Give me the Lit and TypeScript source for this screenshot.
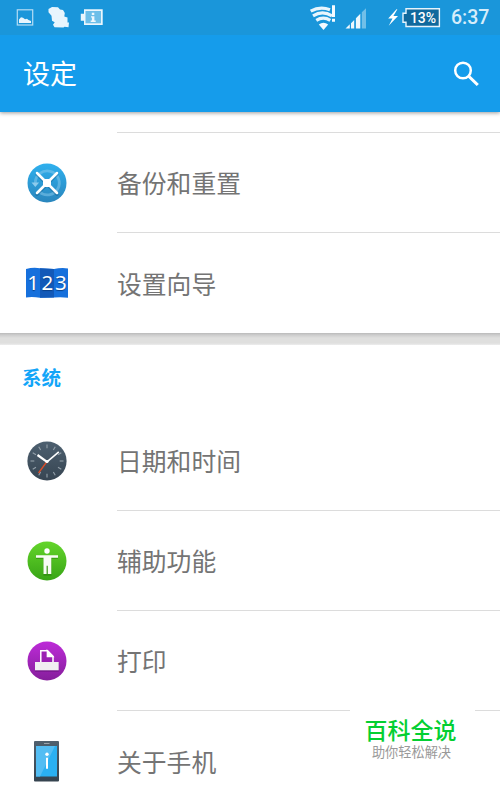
import { LitElement, html, css, svg } from "lit";
import { customElement, property } from "lit/decorators.js";

const icons: Record<string, unknown> = {
  backup: svg`
    <defs><linearGradient id="b" x2="0" y2="1"><stop stop-color="#2fb0ee"/><stop offset="1" stop-color="#2a86bd"/></linearGradient></defs>
    <circle cx="24" cy="24" r="19.5" fill="url(#b)"/>
    <path d="M12.3 24A12 12 0 1 1 16 32.6" fill="none" stroke="#8ccbed" stroke-opacity=".5" stroke-width="2.8"/>
    <path d="M8.500 23.500h7.600l-3.800 4.500z" fill="#8ccbed"/>
    <path d="M14 15.500l20 20M34 15.500L14 35.500" stroke="#0b5584" stroke-opacity=".4" stroke-width="3" stroke-linecap="round"/>
    <path d="M14 14l20 20M34 14L14 34" stroke="#fff" stroke-width="2.500" stroke-linecap="round"/>
    <rect x="20" y="20" width="8" height="8" rx="1.500" fill="#fff"/>`,
  guide: svg`
    <path d="M3 10q7-2 14-.8l14 .8q7-1.500 14-.6v29.300q-7-1-14-.2l-14 .2q-7-1-14-.3z" fill="#1670dc"/>
    <path d="M17 9.200l14 .8v28.500l-14 .2z" fill="#1259b8"/>
    <g font-family="'Noto Sans', sans-serif" font-size="20.500" text-anchor="middle" fill="#fff" style="text-shadow:0 1px 1px #083f87">
      <text x="10" y="31">1</text><text x="24.400" y="31">2</text><text x="37.900" y="31">3</text>
    </g>`,
  clock: svg`
    <defs><linearGradient id="c" x2="0" y2="1"><stop stop-color="#4d6070"/><stop offset="1" stop-color="#374552"/></linearGradient></defs>
    <circle cx="24" cy="24" r="19.600" fill="url(#c)"/>
    <g stroke="#94a0aa" stroke-width="1.100">
      ${[0, 30, 60, 90, 120, 150, 180, 210, 240, 270, 300, 330].map(
        (a) => svg`<path d="M24 7.500v3.800" transform="rotate(${a} 24 24)"/>`)}
    </g>
    <path d="M24 24.500L15.500 36" stroke="#dc4d28" stroke-width="1.300"/>
    <path d="M14.500 18L24 24.800" stroke="#fff" stroke-width="2.200"/>
    <path d="M35.800 14.800L24 24.800" stroke="#fff" stroke-width="1.600"/>
    <circle cx="24" cy="24.500" r="1.600" fill="#fff"/>`,
  access: svg`
    <defs><linearGradient id="a" x2="0" y2="1"><stop stop-color="#64d52b"/><stop offset="1" stop-color="#38a416"/></linearGradient></defs>
    <circle cx="24" cy="24" r="19.500" fill="url(#a)"/>
    <path transform="translate(0 1.200)" fill="#226c0b" fill-opacity=".4" d="M13 18.200h22v2.600h-6.500v16.700H20.500V20.800H13z"/>
    <circle cx="24" cy="14" r="2.700" fill="#fff"/>
    <path d="M13 18.200h22v2.500h-6.700v16.300h-3.500v-8.200h-1.200V37h-3.100V20.700H13z" fill="#f8fcf5"/>`,
  print: svg`
    <defs><linearGradient id="p" x2="0" y2="1"><stop stop-color="#bd2bd8"/><stop offset="1" stop-color="#851e9b"/></linearGradient></defs>
    <circle cx="24" cy="24" r="19.500" fill="url(#p)"/>
    <path d="M12 26h23.700v8.700H12z" fill="#550c69" fill-opacity=".5"/>
    <path d="M17.800 26V13.700h6.700l5.500 5.700V26" fill="#9b20b3" stroke="#fff" stroke-width="1.500"/>
    <path d="M24.300 13.700v5.900h5.700z" fill="#fff" stroke="#fff" stroke-width="1.300"/>
    <path d="M12 25h23.700v8.300H12z" fill="#f1eef2"/>`,
  phone: svg`
    <defs><linearGradient id="h" x2="0" y2="1"><stop stop-color="#50606e"/><stop offset="1" stop-color="#35434f"/></linearGradient></defs>
    <rect x="11" y="4" width="25" height="40.500" rx="1" fill="url(#h)"/>
    <path d="M13 9h21v30.500H13z" fill="#2ab0f2"/>
    <path d="M13 9h19L17 39.500h-4z" fill="#53bdf3"/>
    <path d="M21 6.500h5.500" stroke="#9aa5ad" stroke-width="1"/>
    <circle cx="24" cy="17.300" r="1.700" fill="#fff"/><path d="M24 20.800v11" stroke="#fff" stroke-width="2"/>`,
};

@customElement("status-bar")
class StatusBar extends LitElement {
  static styles = css`
    :host { display: block; position: relative; z-index: 1; height: 35px; background: #1a96da; }
    .bar { display: flex; align-items: center; height: 35px; padding-right: 11px; }
    .art { display: block; flex: none; }
    .charge { margin-left: 38px; width: 34px; text-align: center; font: 500 14px/36px Roboto, sans-serif; color: #fff; }
    .cell { display: grid; width: 73px; flex: none; }
    .cell > * { grid-area: 1 / 1; }
    .time { width: 38px; margin-left: 10px; font: 500 19.500px/36px Roboto, sans-serif; color: #d6edfa; white-space: nowrap; }
    .space { flex: 1; }
  `;
  render() {
    return html`<div class="bar">
      <svg class="art" width="120" height="35" viewBox="0 0 120 35">
        <rect x="17.300" y="9.800" width="15.400" height="15.200" fill="none" stroke="#b4dcf4" stroke-width="1.200"/>
        <path d="M19 23v-3.500l2-2.300 2 .6 2 1.500 2-.6 1.500 1.300 2.500 1V23z" fill="#e8f5fd"/>
        <path d="M48.500 9l3.500-2 6 .3 2 2.200 3 .5 1.800 3-.5 3.500 3.200 1v5h1.500l-.5 4.800-4-.5-1 .7-9-.3-1.500-2.500 1.700-2.500-2.700-1.500-.5-5-3-3.500z" fill="#e8f5fd"/>
        <path d="M84 9.300h18.700V25H84v-4.300h-3.200v-7H84z" fill="#eaf6fd"/>
        <path d="M85.500 11h15.500v12.300H85.500z" fill="#6dbfe9"/>
        <path d="M91.800 12.800h2.500V15h-2.500zM91 16.300h3.400v4.300h1.300V22H90.700v-1.400h1.200v-3H91z" fill="#edf8fe"/>
      </svg>
      <div class="space"></div>
      <svg class="art" width="62" height="35" viewBox="306 0 62 35">
        <g fill="none" stroke="#e8f5fd" stroke-width="3.200">
          <path d="M310.700 11.200Q320 6 330 9.800M313 15.800q9.500-5.800 19 0M316.300 20.300q7-4.400 14 0"/>
        </g>
        <path d="M318.800 24.500q4.700-3.600 9.400 0L323.500 30z" fill="#f4faff"/>
        <path d="M332 5.200h3V17h-3zM332 18.800h3v3h-3z" fill="#f4faff"/>
        <path d="M345.500 28.500l4.300-4.200v4.200zM351 23.200l3.200-3.200v8.500h-3.200zM355.900 18.300l4.400-4.600v14.800h-4.400z" fill="#eff8fd"/>
        <path d="M361.800 12.200l4.200-4v20.300h-4.200z" fill="#71bfe8"/>
      </svg>
      <div class="cell">
        <svg class="art" width="73" height="35" viewBox="368 0 73 35">
          <path d="M396.500 9.300l-8.300 9.200h4.300l-3.800 7.200 9.300-9.700h-4.600l4-6.700z" fill="#fff"/>
          <path d="M406 8.700h33.400v17.800H406v-4.300h-3v-9h3z" fill="#10699d" stroke="#e6f4fc" stroke-width="1.400"/>
        </svg>
        <div class="charge">13%</div>
      </div>
      <div class="time">6:37</div>
    </div>`;
  }
}

@customElement("setting-row")
class SettingRow extends LitElement {
  @property() icon = "";
  @property() label = "";
  @property({ type: Boolean }) last = false;
  static styles = css`
    :host { display: block; }
    .row { display: grid; grid-template-columns: 94px 1fr; column-gap: 23px; height: 100px; }
    .icon { display: flex; align-items: center; justify-content: center; }
    .label { display: flex; align-items: center; box-sizing: border-box; height: 100px; padding-bottom: 2px; border-bottom: 1px solid #dcdcdc;
      font-size: 24.800px; line-height: 36px; color: #747474; }
    .last { border-color: transparent; padding-bottom: 0; }
  `;
  render() {
    return html`<div class="row">
      <div class="icon"><svg width="48" height="48" viewBox="0 0 48 48">${icons[this.icon]}</svg></div>
      <div class="label ${this.last ? "last" : ""}">${this.label}</div>
    </div>`;
  }
}

@customElement("app-root")
class AppRoot extends LitElement {
  static styles = css`
    :host { display: block; position: relative; width: 500px; height: 790px; overflow: hidden; background: #fff;
      font-family: "Noto Sans CJK SC", "Noto Sans", sans-serif; }
    .header { position: relative; display: flex; align-items: center; justify-content: space-between; height: 77px; box-sizing: border-box;
      padding: 0 20px 0 23px; background: #159ceb; box-shadow: 0 1px 4px rgba(0,0,0,.4); }
    .title { font-size: 27px; line-height: 40px; padding-bottom: 2px; color: #fff; }
    .lead { height: 20px; margin-left: 117px; border-bottom: 1px solid #dcdcdc; }
    .gap { height: 12px; background: linear-gradient(#bababa, #cdcdcd 2px, #dfdfde 5px, #dfdfde 10px, #ededed); }
    .section { height: 66px; padding-left: 22px; font-size: 19.500px; font-weight: 700; line-height: 64px; color: #12a5f8; }
    .mark { position: absolute; left: 350px; top: 700px; width: 125px; height: 90px; box-sizing: border-box; padding-top: 12px; background: #fff; text-align: center; }
    .name { margin-right: 4px; font-size: 23px; font-weight: 500; line-height: 34px; color: #04cf32; }
    .motto { margin-right: 2px; font-size: 13.200px; line-height: 11px; color: #999; }
  `;
  render() {
    return html`
      <status-bar></status-bar>
      <div class="header">
        <div class="title">设定</div>
        <svg width="28" height="28" viewBox="0 0 28 28"><circle cx="11" cy="10.500" r="7.800" fill="none" stroke="#fff" stroke-width="2.500"/><path d="M17 16.500l8.800 8.500" stroke="#fff" stroke-width="3.100"/></svg>
      </div>
      <div class="lead"></div>
      <setting-row icon="backup" label="备份和重置"></setting-row>
      <setting-row icon="guide" label="设置向导" last></setting-row>
      <div class="gap"></div>
      <div class="section">系统</div>
      <setting-row icon="clock" label="日期和时间"></setting-row>
      <setting-row icon="access" label="辅助功能"></setting-row>
      <setting-row icon="print" label="打印"></setting-row>
      <setting-row icon="phone" label="关于手机" last></setting-row>
      <div class="mark"><div class="name">百科全说</div><div class="motto">助你轻松解决</div></div>`;
  }
}
